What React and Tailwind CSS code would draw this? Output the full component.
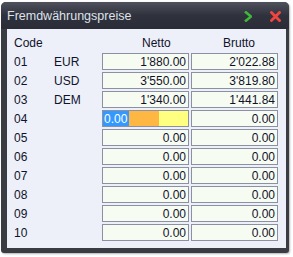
import React from "react";

const rows = [
  ["01", "EUR", "1'880.00", "2'022.88"],
  ["02", "USD", "3'550.00", "3'819.80"],
  ["03", "DEM", "1'340.00", "1'441.84"],
  ["04", "", null, "0.00"],
  ["05", "", "0.00", "0.00"],
  ["06", "", "0.00", "0.00"],
  ["07", "", "0.00", "0.00"],
  ["08", "", "0.00", "0.00"],
  ["09", "", "0.00", "0.00"],
  ["10", "", "0.00", "0.00"],
];

function Field({ value }) {
  return (
    <div className="w-[87px] h-[17px] border border-[#8b90a2] bg-[#f7fcf3] flex items-center justify-end pr-[2px] text-[#10122a] leading-none">
      {value}
    </div>
  );
}

function ActiveField() {
  return (
    <div className="w-[87px] h-[17px] border border-[#8b90a2] bg-[#ffff80] flex items-stretch leading-none">
      <div className="bg-[#3399ff] text-white flex items-center pl-[1px] pr-[1px] w-[26px]">0.00</div>
      <div className="bg-[#ffb744] w-[30px]" />
    </div>
  );
}

export default function App() {
  return (
    <div
      className="w-[293px] h-[257px] bg-white overflow-hidden pt-[2px] pl-[1px]"
      style={{ fontFamily: '"Liberation Sans", Arial, sans-serif' }}
    >
      <div className="w-[288px] h-[251px] rounded-t-[5px] rounded-b-[3px] bg-[#3a3c44] flex flex-col shadow-[1px_1px_2px_rgba(0,0,0,0.3)]">
        <div className="h-[27px] shrink-0 rounded-t-[5px] bg-gradient-to-b from-[#50535d] via-[#2f323d] to-[#2a2d38] flex items-center pl-[6px] pr-[8px]">
          <span className="text-[12.5px] text-[#dfe2ea] leading-none mt-[1px]">Fremdwährungspreise</span>
          <div className="ml-auto flex items-center gap-[18px] mt-[1px]">
            <svg width="8" height="11" viewBox="0 0 8 11">
              <path d="M1 0.5 L7 5.5 L1 10.5" fill="none" stroke="#3fb83a" strokeWidth="2.6" strokeLinejoin="miter" />
            </svg>
            <svg width="11" height="11" viewBox="0 0 11 11">
              <path d="M1.5 1.5 L9.5 9.5 M9.5 1.5 L1.5 9.5" stroke="#f0443f" strokeWidth="2.8" strokeLinecap="square" />
            </svg>
          </div>
        </div>
        <div className="flex-1 mx-[6px] mr-[3px] mb-[5px] bg-[#edf0f9] pl-[7px] pt-[7px] text-[12px] text-[#10122a]">
          <div className="flex items-center h-[14px] mb-[3px] leading-none">
            <span className="w-[128px]">Code</span>
            <span className="w-[81px]">Netto</span>
            <span>Brutto</span>
          </div>
          <div className="flex flex-col gap-[2px]">
            {rows.map(([code, cur, netto, brutto]) => (
              <div key={code} className="flex items-center h-[17px] leading-none">
                <span className="w-[40px]">{code}</span>
                <span className="w-[48px]">{cur}</span>
                {netto === null ? <ActiveField /> : <Field value={netto} />}
                <div className="w-[2px]" />
                <Field value={brutto} />
              </div>
            ))}
          </div>
        </div>
      </div>
    </div>
  );
}
